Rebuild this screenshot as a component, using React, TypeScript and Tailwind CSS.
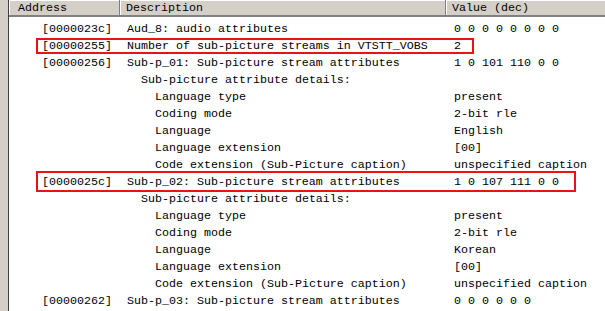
const rows: { addr?: string; indent: number; desc: string; value: string }[] = [
  { addr: "[0000023c]", indent: 0, desc: "Aud_8: audio attributes", value: "0 0 0 0 0 0 0 0" },
  { addr: "[00000255]", indent: 0, desc: "Number of sub-picture streams in VTSTT_VOBS", value: "2" },
  { addr: "[00000256]", indent: 0, desc: "Sub-p_01: Sub-picture stream attributes", value: "1 0 101 110 0 0" },
  { indent: 1, desc: "Sub-picture attribute details:", value: "" },
  { indent: 2, desc: "Language type", value: "present" },
  { indent: 2, desc: "Coding mode", value: "2-bit rle" },
  { indent: 2, desc: "Language", value: "English" },
  { indent: 2, desc: "Language extension", value: "[00]" },
  { indent: 2, desc: "Code extension (Sub-Picture caption)", value: "unspecified caption" },
  { addr: "[0000025c]", indent: 0, desc: "Sub-p_02: Sub-picture stream attributes", value: "1 0 107 111 0 0" },
  { indent: 1, desc: "Sub-picture attribute details:", value: "" },
  { indent: 2, desc: "Language type", value: "present" },
  { indent: 2, desc: "Coding mode", value: "2-bit rle" },
  { indent: 2, desc: "Language", value: "Korean" },
  { indent: 2, desc: "Language extension", value: "[00]" },
  { indent: 2, desc: "Code extension (Sub-Picture caption)", value: "unspecified caption" },
  { addr: "[00000262]", indent: 0, desc: "Sub-p_03: Sub-picture stream attributes", value: "0 0 0 0 0 0" },
];

const indents = ["pl-[6px]", "pl-[20px]", "pl-[34px]"];

export default function App() {
  return (
    <div
      className="relative w-[605px] h-[311px] overflow-hidden bg-white flex text-black text-[11.67px] leading-[17px] whitespace-pre"
      style={{ fontFamily: '"Liberation Mono", "Courier New", monospace' }}
    >
      <div className="w-[9px] shrink-0 bg-[#d4d0c8] border-r border-[#404040]" />

      <div className="flex-1 flex flex-col">
        <div className="h-[17px] flex bg-[#d4d0c8] border-b-2 border-b-[#808080] leading-[15px]">
          <div className="w-[110px] pl-[8px] border-t border-l border-white">Address</div>
          <div className="w-px bg-[#808080]" />
          <div className="w-[325px] pl-[5px] border-l border-t border-white">Description</div>
          <div className="w-px bg-[#808080]" />
          <div className="flex-1 pl-[5px] border-l border-t border-white">Value (dec)</div>
        </div>

        <div className="pt-[4px]">
          {rows.map((r, i) => (
            <div key={i} className="flex h-[17px]">
              <div className="w-[112px] pl-[33px]">{r.addr ?? ""}</div>
              <div className={`w-[327px] ${indents[r.indent]}`}>{r.desc}</div>
              <div className="flex-1 pl-[6px]">{r.value}</div>
            </div>
          ))}
        </div>
      </div>

      <div className="absolute left-[36px] top-[38px] w-[438px] h-[16px] border-2 border-[#ee1111]" />
      <div className="absolute left-[36px] top-[171px] w-[540px] h-[21px] border-2 border-[#ee1111]" />
    </div>
  );
}
